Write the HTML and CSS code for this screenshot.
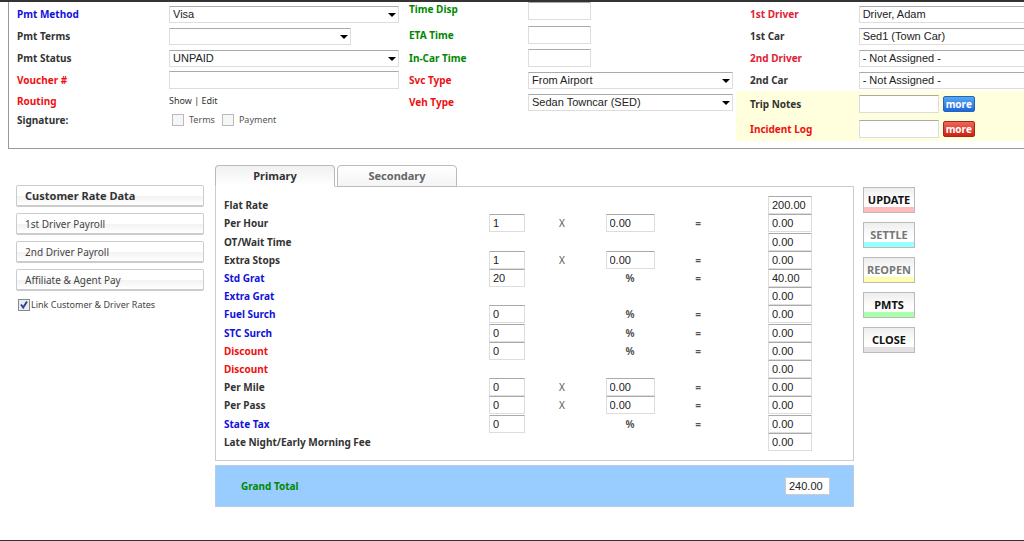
FILE: index.html
```
<!DOCTYPE html>
<html lang="en">
<head>
<meta charset="utf-8">
<title>Trip Billing</title>
<link rel="stylesheet" href="styles.css">
</head>
<body>
<main class="page">
  <form class="trip">
    <div class="col col-payment">
      <div class="row"><label class="blue" for="method">Pmt Method</label><span class="select"><select id="method"><option>Visa</option></select></span></div>
      <div class="row"><label for="terms">Pmt Terms</label><span class="select select-short"><select id="terms"><option></option></select></span></div>
      <div class="row"><label for="status">Pmt Status</label><span class="select"><select id="status"><option>UNPAID</option></select></span></div>
      <div class="row"><label class="red" for="voucher">Voucher #</label><input class="text" id="voucher" type="text"></div>
      <div class="row row-low"><span class="label red">Routing</span><span class="links"><a href="#show">Show</a> | <a href="#edit">Edit</a></span></div>
      <div class="row row-low"><span class="label">Signature:</span><span class="checks"><input class="check" type="checkbox" id="sig-terms"><label for="sig-terms">Terms</label><input class="check" type="checkbox" id="sig-pay"><label for="sig-pay">Payment</label></span></div>
    </div>
    <div class="col col-service">
      <div class="row row-top"><label class="green" for="disp">Time Disp</label><input class="text text-time" id="disp" type="text"></div>
      <div class="row row-tall"><label class="green" for="eta">ETA Time</label><input class="text text-time" id="eta" type="text"></div>
      <div class="row row-tall"><label class="green" for="incar">In-Car Time</label><input class="text text-time" id="incar" type="text"></div>
      <div class="row"><label class="red" for="svc">Svc Type</label><span class="select"><select id="svc"><option>From Airport</option></select></span></div>
      <div class="row"><label class="red" for="veh">Veh Type</label><span class="select"><select id="veh"><option>Sedan Towncar (SED)</option></select></span></div>
    </div>
    <div class="col col-driver">
      <div class="row"><label class="crimson" for="driver1">1st Driver</label><span class="select"><select id="driver1"><option>Driver, Adam</option></select></span></div>
      <div class="row"><label for="car1">1st Car</label><span class="select"><select id="car1"><option>Sed1 (Town Car)</option></select></span></div>
      <div class="row"><label class="crimson" for="driver2">2nd Driver</label><span class="select"><select id="driver2"><option>- Not Assigned -</option></select></span></div>
      <div class="row"><label for="car2">2nd Car</label><span class="select"><select id="car2"><option>- Not Assigned -</option></select></span></div>
      <div class="notes">
        <div class="row row-note"><label for="notes">Trip Notes</label><span class="note"><input class="text text-note" id="notes" type="text"><button class="more more-blue" type="button">more</button></span></div>
        <div class="row row-note"><label class="red" for="incident">Incident Log</label><span class="note"><input class="text text-note" id="incident" type="text"><button class="more more-red" type="button">more</button></span></div>
      </div>
    </div>
  </form>

  <div class="billing">
    <nav class="side">
      <button class="side-btn side-current" type="button">Customer Rate Data</button>
      <button class="side-btn" type="button">1st Driver Payroll</button>
      <button class="side-btn" type="button">2nd Driver Payroll</button>
      <button class="side-btn" type="button">Affiliate &amp; Agent Pay</button>
      <span class="link-rates"><input class="check" type="checkbox" id="link" checked><label for="link">Link Customer &amp; Driver Rates</label></span>
    </nav>

    <section class="rates">
      <div class="tabs">
        <button class="tab tab-current" type="button">Primary</button>
        <button class="tab" type="button">Secondary</button>
      </div>
      <div class="sheet">
        <table class="lines">
          <colgroup><col><col class="c-qty"><col class="c-op"><col class="c-rate"><col class="c-op"><col class="c-sum"></colgroup>
          <tbody>
            <tr><th scope="row">Flat Rate</th><td></td><td></td><td></td><td></td><td class="sum"><input class="text" aria-label="Flat Rate total" value="200.00"></td></tr>
            <tr><th scope="row">Per Hour</th><td><input class="text" aria-label="Hours" value="1"></td><td class="op times">X</td><td class="rate"><input class="text" aria-label="Per Hour rate" value="0.00"></td><td class="op">=</td><td class="sum"><input class="text" aria-label="Per Hour total" value="0.00"></td></tr>
            <tr><th scope="row">OT/Wait Time</th><td></td><td></td><td></td><td></td><td class="sum"><input class="text" aria-label="OT/Wait Time total" value="0.00"></td></tr>
            <tr><th scope="row">Extra Stops</th><td><input class="text" aria-label="Stops" value="1"></td><td class="op times">X</td><td class="rate"><input class="text" aria-label="Extra Stops rate" value="0.00"></td><td class="op">=</td><td class="sum"><input class="text" aria-label="Extra Stops total" value="0.00"></td></tr>
            <tr><th class="blue" scope="row">Std Grat</th><td><input class="text" aria-label="Std Grat percent" value="20"></td><td></td><td class="op">%</td><td class="op">=</td><td class="sum"><input class="text" aria-label="Std Grat total" value="40.00"></td></tr>
            <tr><th class="blue" scope="row">Extra Grat</th><td></td><td></td><td></td><td></td><td class="sum"><input class="text" aria-label="Extra Grat total" value="0.00"></td></tr>
            <tr><th class="blue" scope="row">Fuel Surch</th><td><input class="text" aria-label="Fuel Surch percent" value="0"></td><td></td><td class="op">%</td><td class="op">=</td><td class="sum"><input class="text" aria-label="Fuel Surch total" value="0.00"></td></tr>
            <tr><th class="blue" scope="row">STC Surch</th><td><input class="text" aria-label="STC Surch percent" value="0"></td><td></td><td class="op">%</td><td class="op">=</td><td class="sum"><input class="text" aria-label="STC Surch total" value="0.00"></td></tr>
            <tr><th class="red" scope="row">Discount</th><td><input class="text" aria-label="Discount percent" value="0"></td><td></td><td class="op">%</td><td class="op">=</td><td class="sum"><input class="text" aria-label="Discount percent total" value="0.00"></td></tr>
            <tr><th class="red" scope="row">Discount</th><td></td><td></td><td></td><td></td><td class="sum"><input class="text" aria-label="Discount total" value="0.00"></td></tr>
            <tr><th scope="row">Per Mile</th><td><input class="text" aria-label="Miles" value="0"></td><td class="op times">X</td><td class="rate"><input class="text" aria-label="Per Mile rate" value="0.00"></td><td class="op">=</td><td class="sum"><input class="text" aria-label="Per Mile total" value="0.00"></td></tr>
            <tr><th scope="row">Per Pass</th><td><input class="text" aria-label="Passengers" value="0"></td><td class="op times">X</td><td class="rate"><input class="text" aria-label="Per Pass rate" value="0.00"></td><td class="op">=</td><td class="sum"><input class="text" aria-label="Per Pass total" value="0.00"></td></tr>
            <tr><th class="blue" scope="row">State Tax</th><td><input class="text" aria-label="State Tax percent" value="0"></td><td></td><td class="op">%</td><td class="op">=</td><td class="sum"><input class="text" aria-label="State Tax total" value="0.00"></td></tr>
            <tr><th scope="row">Late Night/Early Morning Fee</th><td></td><td></td><td></td><td></td><td class="sum"><input class="text" aria-label="Late Night/Early Morning Fee total" value="0.00"></td></tr>
          </tbody>
        </table>
      </div>
      <div class="grand">
        <label class="green" for="grand">Grand Total</label>
        <input class="text text-grand" id="grand" type="text" value="240.00">
      </div>
    </section>

    <div class="actions">
      <button class="action a-pink" type="button">UPDATE</button>
      <button class="action a-cyan dim" type="button">SETTLE</button>
      <button class="action a-yellow dim" type="button">REOPEN</button>
      <button class="action a-green" type="button">PMTS</button>
      <button class="action a-grey" type="button">CLOSE</button>
    </div>
  </div>
</main>
</body>
</html>
```
FILE: styles.css
```
* { box-sizing: border-box; }

body {
  margin: 0;
  background: #fff;
  color: #333;
  font: 10px/14px "Noto Sans", "Open Sans", sans-serif;
}

button, input, select { margin: 0; font: inherit; color: inherit; }
a { color: inherit; text-decoration: none; }

.page {
  min-height: 100vh;
  overflow: hidden;
  border-top: 2px solid #333;
  border-bottom: 1px solid #333;
}

.blue { color: #11d; }
.red { color: #e11; }
.crimson { color: #d23; }
.green { color: #080; }

/* Fields */
.text, .select select {
  display: block;
  width: 100%;
  height: 18px;
  padding: 0 3px;
  border: 1px solid #ddd;
  border-top-color: #aaa;
  border-radius: 0;
  background: #fff;
  color: #222;
  font: 11px/16px "Liberation Sans", Arial, sans-serif;
}

.select { position: relative; display: block; }
.select-short { width: 79%; }
.select select { height: 17px; line-height: 15px; appearance: none; }
.select::after {
  content: "";
  position: absolute;
  right: 3px;
  top: 7px;
  border: 4px solid transparent;
  border-top-color: #000;
  border-bottom: 0;
  pointer-events: none;
}

.check {
  appearance: none;
  width: 12px;
  height: 12px;
  border: 1px solid #bbb;
  background: #f6f6f6;
}

/* Trip details */
.trip {
  display: grid;
  grid-template-columns: 382fr 324fr 304fr;
  column-gap: 10px;
  margin: 0 -24px 0 8px;
  padding: 0 0 7px 8px;
  border: 1px solid #999;
  border-top: 0;
}

.row {
  display: grid;
  align-items: center;
  min-height: 22px;
}
.row > label, .label { font-weight: bold; }
.row-low { min-height: 19px; }
.row-tall { min-height: 23px; }
.row-top { min-height: 21px; align-items: start; }
.row-note { min-height: 25px; }

.col-payment { padding-top: 1px; }
.col-payment .row { grid-template-columns: 152fr 230fr; }
.col-service .row { grid-template-columns: 119fr 205fr; }
.col-driver { padding-top: 1px; margin-left: -7px; }
.col-driver .row { grid-template-columns: 109fr 189fr; padding-left: 14px; }

.text-time { width: 63px; }
.text-note { width: 80px; }
.links, .checks { font-size: 9px; }
.checks { display: flex; align-items: center; gap: 5px; padding: 0 3px; }
.checks label { margin-right: 2px; color: #555; }

.notes { background: #ffd; }
.note { display: flex; gap: 4px; align-items: center; }
.more {
  height: 16px;
  padding: 0 2px;
  border: 1px solid;
  border-radius: 2px;
  color: #fff;
  font: bold 10px/12px "Noto Sans", sans-serif;
}
.more-blue { border-color: #26b; background: linear-gradient(#5ae, #26d); }
.more-red { border-color: #a22; background: linear-gradient(#e65, #c21); }

/* Billing */
.billing {
  display: grid;
  grid-template-columns: 188px minmax(0, 1fr) 52px;
  align-items: start;
  padding: 16px 109px 0 16px;
}

.side { display: grid; gap: 6px; padding-top: 20px; }
.side-btn {
  height: 22px;
  padding: 0 8px;
  border: 1px solid #ccc;
  border-bottom: 2px solid #ccc;
  border-radius: 2px;
  background: linear-gradient(#fff 50%, #f3f3f3 55%, #fff);
  color: #444;
  font-size: 10px;
  text-align: left;
}
.side-current { color: #333; font-size: 11px; font-weight: bold; }
.link-rates { display: flex; align-items: center; gap: 1px; padding: 1px 2px; color: #444; font-size: 9px; }
.link-rates .check {
  border-color: #888;
  background: #e8ecf4 url("data:image/svg+xml,%3Csvg xmlns='http://www.w3.org/2000/svg' viewBox='0 0 10 10'%3E%3Cpath d='M2 4.500L4.200 7.500L8 1.500' fill='none' stroke='%23348' stroke-width='2'/%3E%3C/svg%3E");
}

.rates { padding: 0 9px 0 11px; }
.tabs { display: flex; gap: 2px; margin-bottom: -1px; }
.tab {
  position: relative;
  width: 120px;
  height: 22px;
  border: 1px solid #bbb;
  border-radius: 4px 4px 0 0;
  background: linear-gradient(#fff, #f4f4f4);
  color: #666;
  font-size: 11px;
  font-weight: bold;
}
.tab-current {
  border-bottom-color: #fff;
  background: linear-gradient(#f1f1f1, #fff);
  color: #333;
}
.sheet { padding: 9px 0; border: 1px solid #ccc; }

.lines { width: 100%; height: 255px; border-collapse: collapse; table-layout: fixed; }
.lines th { padding: 0 0 0 8px; text-align: left; }
.lines td { padding: 0; }
.lines .op { text-align: center; font-weight: bold; color: #555; }
.lines .times { font-weight: normal; }
.c-qty { width: 36px; }
.c-op { width: 74px; }
.c-rate { width: 62px; }
.c-sum { width: 118px; }
.rate .text { width: 49px; margin: 0 auto; }
.sum .text { width: 44px; margin-left: 33px; }

.grand {
  display: flex;
  align-items: center;
  justify-content: space-between;
  min-height: 42px;
  margin-top: 4px;
  padding: 0 23px 0 25px;
  border: 1px solid #b8cde0;
  background: #9cf;
  font-weight: bold;
}
.text-grand { width: 45px; border-color: #ccc; }

/* Actions */
.actions { display: grid; gap: 9px; padding-top: 22px; }
.action {
  height: 26px;
  padding: 0;
  border: 1px solid #bbb;
  background: linear-gradient(#eee, #fff 60%);
  box-shadow: inset 0 -5px var(--mark);
  color: #111;
  font-size: 11px;
  font-weight: bold;
}
.dim { color: #777; }
.a-pink { --mark: #fbb; }
.a-cyan { --mark: #9ff; }
.a-yellow { --mark: #ffa; }
.a-green { --mark: #afa; }
.a-grey { --mark: #e4e0e4; }
```
